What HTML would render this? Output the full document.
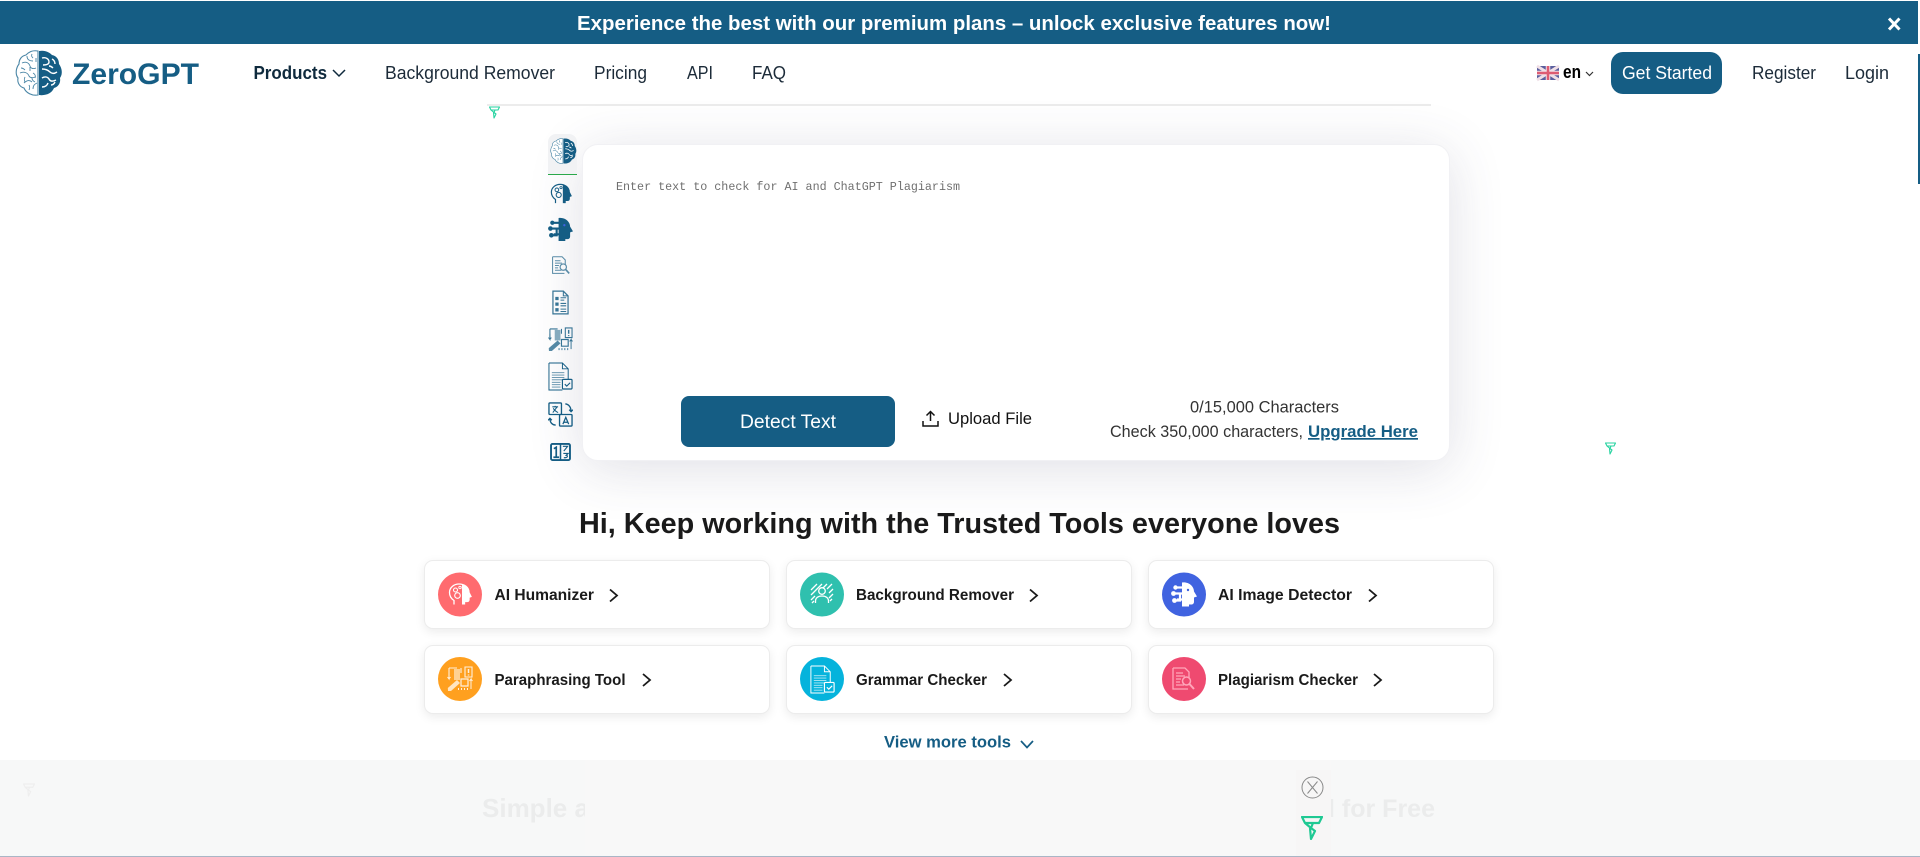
<!DOCTYPE html>
<html lang="en">
<head>
<meta charset="utf-8">
<title>ZeroGPT</title>
<style>
html,body{margin:0;padding:0;width:1920px;height:857px;overflow:hidden;background:#fff;font-family:"Liberation Sans",sans-serif}
.a{position:absolute}
#banner{left:0;top:1px;width:1918px;height:43px;background:#155d84}
#sb{left:1918px;top:54px;width:2px;height:130px;background:#155d84}
#rule{left:487px;top:104px;width:944px;height:2px;background:#ececec}
#start{left:1611px;top:52px;width:111px;height:42px;border-radius:12px;background:#155d84}
#card{left:582px;top:144px;width:868px;height:317px;background:#fff;border-radius:16px;border:1px solid #f1f1f4;box-sizing:border-box;box-shadow:0 8px 55px rgba(60,60,100,.16)}
#side{left:548px;top:134px;width:29px;height:40px;background:#f1f2f4;border-radius:8px 8px 0 0;border-bottom:1px solid #2aa84a}
#btn{left:681px;top:396px;width:214px;height:51px;border-radius:8px;background:#155d84}
.t{height:69px;width:346px;background:#fff;border:1px solid #ececec;border-radius:9px;box-sizing:border-box;box-shadow:0 3px 10px rgba(0,0,0,.08)}
#ov{left:0;top:760px;width:1920px;height:96px;background:#f7f8f8}
#ovl{left:0;top:856px;width:1920px;height:1px;background:#a9b6c6}
svg#top{position:absolute;left:0;top:0}
</style>
</head>
<body>
<div class="a" id="banner"></div>
<div class="a" id="sb"></div>
<div class="a" id="rule"></div>
<div class="a" id="start"></div>
<div class="a" id="card"></div>
<div class="a" id="side"></div>
<div class="a" id="btn"></div>
<div class="a t" style="left:424px;top:560px"></div>
<div class="a t" style="left:786px;top:560px"></div>
<div class="a t" style="left:1148px;top:560px"></div>
<div class="a t" style="left:424px;top:645px"></div>
<div class="a t" style="left:786px;top:645px"></div>
<div class="a t" style="left:1148px;top:645px"></div>
<div class="a" id="ov"></div>
<div class="a" id="ovl"></div>

<svg id="top" width="1920" height="857" viewBox="0 0 1920 857" xmlns="http://www.w3.org/2000/svg" font-family="'Liberation Sans',sans-serif">
<defs>
<symbol id="brain" viewBox="0 0 48 48">
  <path d="M23 2C17 1 14 3 11 6 6 7 4 11 4 15 1 19 0 25 3 29c-1 5 2 9 6 10 2 5 8 8 14 7z" fill="#fff" stroke="#4a86a6" stroke-width="1.100"/>
  <path d="M24 2c6-1 10 1 13 4 5 1 7 5 7 9 3 4 4 10 1 14 1 5-2 9-6 10-2 5-8 8-15 7z" fill="#155d84"/>
  <path d="M7 14c4-2 7 0 8 3s4 3 6 2M12 7c0 4 3 5 6 5M5 24c4-2 8 0 9 3 1 2 4 2 6 1M9 34c3-3 6-3 8-1M15 22v-4M18 40c0-4 2-5 4-6M10 28c-1 2-1 3 0 5M18 24c2 1 3 3 2 5M17 5c-1 2 0 3 1 4M21 9v4M6 19c2 0 3 1 4 2M14 36c1 2 1 3 0 5M20 33c-2-1-3-2-3-4" fill="none" stroke="#4a86a6" stroke-width=".9"/>
  <path d="M27 9c4-1 7 1 7 4s-4 3-6 3M27 20c4 0 6 1 8 3s4 2 7 0M37 10c2 1 3 3 3 5M27 29c3-2 6-1 7 1s3 3 7 1M27 38c3 0 5-1 6-4M36 36c2 0 3-1 4-3M34 17c2 0 3 1 4 2" fill="none" stroke="#fff" stroke-width="1.400"/>
</symbol>
<symbol id="fz" viewBox="0 0 22 24">
  <path d="M1 1h20l-3 6H4zM4 7l6 5M12 7l-2 5 4 3-4 8-1-11" fill="none" stroke="currentColor" stroke-width="2.200" stroke-linejoin="round"/>
</symbol>
<symbol id="head" viewBox="0 0 24 24">
  <path d="M6 22v-4C3 16 1.500 13 1.500 10 1.500 5 6 1.500 11 1.500c5 0 10 3 10 8.500l2 4-2 .8V17c0 1.500-1 2-2 2h-2.500v3" fill="none" stroke="currentColor" stroke-width="1.300"/>
  <path d="M14 1.900c4.500.5 7 4 7 8.100l2 4-2 .8V17c0 1.500-1 2-2 2h-2.500v3H14z" fill="currentColor"/>
  <circle cx="7.500" cy="7.500" r="2" fill="none" stroke="currentColor" stroke-width="1.100"/>
  <circle cx="9.500" cy="13" r="2.800" fill="none" stroke="currentColor" stroke-width="1.100"/>
  <circle cx="12" cy="5" r="1.200" fill="none" stroke="currentColor" stroke-width=".9"/>
</symbol>
<symbol id="aihead" viewBox="0 0 26 26">
  <path d="M11 1c7-1 12 4 12 9l3 5-3 1v4c0 2-1 3-3 3h-2v2h-7V1z" fill="currentColor"/>
  <path d="M12 6H6M12 12H3M12 18H6M9 12v7H4" fill="none" stroke="currentColor" stroke-width="2.200"/>
  <circle cx="4.500" cy="6" r="2.200" fill="currentColor"/><circle cx="2.500" cy="12" r="2.400" fill="currentColor"/><circle cx="3.500" cy="19" r="2.400" fill="currentColor"/>
  <circle cx="17" cy="8.500" r="1.200" fill="#4063e0"/>
</symbol>
<symbol id="docmag" viewBox="0 0 24 24">
  <path d="M2 1h12l4 4v6M2 1v21h15" fill="none" stroke="currentColor" stroke-width="1.300"/>
  <path d="M5 6h7M5 9h9M5 12h5M5 15h4M5 18h8" stroke="currentColor" stroke-width="1.300"/>
  <circle cx="15.500" cy="14" r="4" fill="none" stroke="currentColor" stroke-width="1.500"/>
  <path d="M18.500 17l4.500 5" stroke="currentColor" stroke-width="2"/>
</symbol>
<symbol id="list" viewBox="0 0 18 26">
  <path d="M1 1h11l5 5v19H1z" fill="none" stroke="currentColor" stroke-width="1.300"/>
  <path d="M12 1v5h5" fill="none" stroke="currentColor" stroke-width="1.100"/>
  <path d="M3.500 7h3.500v3.500H3.500zM3.500 13h3.500v3.500H3.500zM3.500 19h3.500v3.500H3.500z" fill="currentColor"/>
  <path d="M9 8h6M9 10.500h4M9 14h6M9 16.500h6M9 20h6M9 22.500h6" stroke="currentColor" stroke-width="1.100"/>
</symbol>
<symbol id="para" viewBox="0 0 26 26">
  <path d="M2 2h8M2 2v10M18 1h7v10h-7zM14 2v5" fill="none" stroke="currentColor" stroke-width="1.100"/>
  <path d="M7 3h6v11H7z" fill="currentColor" opacity=".6"/>
  <path d="M21.500 3v4M21.500 8.500v1" stroke="currentColor" stroke-width="1.500"/>
  <path d="M2 7v6l-1.500-2M2 13l1.500-2M24 23V13l-1.500 2M24 13l1.500 2" fill="none" stroke="currentColor" stroke-width="1"/>
  <path d="M14 13h7v7h-7z" fill="none" stroke="currentColor" stroke-width="1.200"/>
  <path d="M1 25l-.2-3L10 14l3 3-9 8z" fill="currentColor" opacity=".85"/>
  <path d="M11 23h1M14 23h1M17 23h1M20 23h1" stroke="currentColor" stroke-width="2"/>
</symbol>
<symbol id="docchk" viewBox="0 0 26 30">
  <path d="M1 1h14l6 6v11M1 1v28h14M15 1v6h6" fill="none" stroke="currentColor" stroke-width="1"/>
  <path d="M4 11h13M4 13.500h13M4 16h13M4 18.500h11M4 21h9M4 23.500h9M4 26h9" stroke="currentColor" stroke-width=".9" opacity=".7"/>
  <rect x="15" y="18" width="10" height="10" rx="1" fill="none" stroke="currentColor" stroke-width="1.200"/>
  <path d="M17.500 23l2 2 3.500-3.500" fill="none" stroke="currentColor" stroke-width="1.200"/>
</symbol>
<symbol id="trans" viewBox="0 0 26 26">
  <rect x="1" y="1" width="13" height="12" rx="1" fill="none" stroke="currentColor" stroke-width="1.400"/>
  <rect x="12" y="13" width="13" height="12" rx="1" fill="none" stroke="currentColor" stroke-width="1.400"/>
  <path d="M4.500 5h6M7.500 4v1M5 11l4.500-6M5.500 6.500c1 2 3 3.500 5 4.500" fill="none" stroke="currentColor" stroke-width="1.100"/>
  <path d="M15.500 23l3-7 3 7M16.500 21h4" fill="none" stroke="currentColor" stroke-width="1.300"/>
  <path d="M18 2c3 0 6 3 6 8M22 8l2 2 2-2M8 24c-3 0-6-2-6-7M0 19l2-2 2 2" fill="none" stroke="currentColor" stroke-width="1.400"/>
</symbol>
<symbol id="num" viewBox="0 0 22 19">
  <rect x="1" y="1" width="20" height="17" rx="1.500" fill="none" stroke="currentColor" stroke-width="2"/>
  <path d="M11 1v17" stroke="currentColor" stroke-width="1.600"/>
  <path d="M4 6l2.500-1.500V15M3.500 15h6" fill="none" stroke="currentColor" stroke-width="1.800"/>
  <path d="M13.500 3.500h5l-4 5M14 11h5l-2 2c2 0 2 3-2.500 2.500" fill="none" stroke="currentColor" stroke-width="1.200"/>
</symbol>
<symbol id="cut" viewBox="0 0 24 24">
  <path d="M1 8L7 2M1 13L12 2M1 18L5 14M17 2l-4 4M22 2l-5 5M23 7l-4 4M23 12l-4 4M22 17l-2 2M2 21l2-2" stroke="currentColor" stroke-width="1.300" fill="none"/>
  <circle cx="12" cy="9" r="3.300" fill="none" stroke="currentColor" stroke-width="1.300"/>
  <path d="M5.500 21v-2c0-3 2.500-5 6.500-5s6.500 2 6.500 5v2" fill="none" stroke="currentColor" stroke-width="1.300"/>
</symbol>
</defs>

<!-- banner -->
<text x="577" y="30" font-size="20" font-weight="700" fill="#fff" textLength="754" lengthAdjust="spacingAndGlyphs">Experience the best with our premium plans – unlock exclusive features now!</text>
<path d="M1889 18.500l10.500 11M1899.500 18.500l-10.500 11" stroke="#fff" stroke-width="3" fill="none"/>

<!-- logo -->
<use href="#brain" x="15" y="49" width="48" height="48"/>
<text x="72" y="84" font-size="30" font-weight="700" fill="#155d84" textLength="127" lengthAdjust="spacingAndGlyphs">ZeroGPT</text>

<!-- nav -->
<g font-size="18" fill="#1c2b39">
<text x="253.500" y="79" font-weight="700" font-size="18" fill="#0f2a3d" textLength="73.500" lengthAdjust="spacingAndGlyphs">Products</text>
<text x="385" y="79" textLength="170" lengthAdjust="spacingAndGlyphs">Background Remover</text>
<text x="594" y="79" textLength="53" lengthAdjust="spacingAndGlyphs">Pricing</text>
<text x="687" y="79" textLength="26" lengthAdjust="spacingAndGlyphs">API</text>
<text x="752" y="79" textLength="34" lengthAdjust="spacingAndGlyphs">FAQ</text>
<text x="1752" y="79" textLength="64" lengthAdjust="spacingAndGlyphs">Register</text>
<text x="1845" y="79" textLength="44" lengthAdjust="spacingAndGlyphs">Login</text>
</g>
<path d="M333 70l6 6 6-6" fill="none" stroke="#0f2a3d" stroke-width="1.500"/>
<text x="1622" y="79" font-size="18" fill="#fff" textLength="90" lengthAdjust="spacingAndGlyphs">Get Started</text>

<!-- flag -->
<g>
<rect x="1537" y="66" width="22" height="14" rx="2" fill="#5a5f9e"/>
<path d="M1537 66l22 14M1559 66l-22 14" stroke="#f0dfe6" stroke-width="3"/>
<path d="M1548 66v14M1537 73h22" stroke="#f0dfe6" stroke-width="4.500"/>
<path d="M1548 66v14M1537 73h22" stroke="#de5b72" stroke-width="2.500"/>
</g>
<text x="1563" y="78" font-size="18" font-weight="700" fill="#000" textLength="18" lengthAdjust="spacingAndGlyphs">en</text>
<path d="M1586 72l3.500 3.500 3.500-3.500" fill="none" stroke="#333" stroke-width="1.200"/>

<!-- small funnel logos -->
<use href="#fz" x="489" y="106" width="11" height="13" color="#26d3a0"/>
<use href="#fz" x="1605" y="442" width="11" height="13" color="#26d3a0"/>

<!-- sidebar icons -->
<use href="#brain" x="550" y="137" width="27" height="28"/>
<g color="#155d84">
<use href="#head" x="550" y="183" width="22" height="22"/>
<use href="#aihead" x="548" y="217" width="25" height="25"/>
<use href="#docmag" x="551" y="256" width="19" height="19" opacity=".7"/>
<use href="#list" x="552" y="290" width="17" height="25" opacity=".85"/>
<use href="#para" x="548" y="327" width="25" height="25" opacity=".85"/>
<use href="#docchk" x="548" y="362" width="25" height="29"/>
<use href="#trans" x="548" y="402" width="25" height="25"/>
<use href="#num" x="550" y="443" width="21" height="18"/>
</g>

<!-- textarea -->
<text x="616" y="190" font-family="'Liberation Mono',monospace" font-size="11.700" fill="#6f6f6f" textLength="344">Enter text to check for AI and ChatGPT Plagiarism</text>
<text x="740" y="428" font-size="19" fill="#fff" textLength="96" lengthAdjust="spacingAndGlyphs">Detect Text</text>
<path d="M930.500 421v-9M926.500 415.500l4-4 4 4M923 421v5h15v-5" fill="none" stroke="#111" stroke-width="1.500"/>
<text x="948" y="424" font-size="17" fill="#111" textLength="84" lengthAdjust="spacingAndGlyphs">Upload File</text>
<text x="1190" y="412.500" font-size="17" fill="#333" textLength="149" lengthAdjust="spacingAndGlyphs">0/15,000 Characters</text>
<text x="1110" y="437" font-size="17" fill="#333" textLength="193" lengthAdjust="spacingAndGlyphs">Check 350,000 characters,</text>
<text x="1308" y="437" font-size="17" font-weight="700" fill="#155d84" text-decoration="underline" textLength="110" lengthAdjust="spacingAndGlyphs">Upgrade Here</text>

<!-- heading -->
<text x="579" y="533" font-size="28.500" font-weight="700" fill="#1a1a1a" textLength="761" lengthAdjust="spacingAndGlyphs">Hi, Keep working with the Trusted Tools everyone loves</text>

<!-- tools -->
<circle cx="460" cy="594.500" r="22" fill="#ff6b6f"/>
<circle cx="822" cy="594.500" r="22" fill="#2fc0ae"/>
<circle cx="1184" cy="594.500" r="22" fill="#4063e0"/>
<circle cx="460" cy="679" r="22" fill="#ffa01f"/>
<circle cx="822" cy="679" r="22" fill="#05b3dc"/>
<circle cx="1184" cy="679" r="22" fill="#ef4a70"/>
<g color="#fff">
<use href="#head" x="448" y="582" width="24" height="25"/>
<use href="#cut" x="810" y="582" width="24" height="24"/>
<use href="#aihead" x="1171" y="581" width="26" height="27"/>
<use href="#para" x="447" y="666" width="26" height="26" opacity=".85"/>
<use href="#docchk" x="809" y="665" width="27" height="29"/>
</g>
<use href="#docmag" x="1171" y="667" width="24" height="24" color="#ffa6ba"/>
<g font-size="16" font-weight="700" fill="#1a1a1a">
<text x="494.500" y="600" textLength="99.500" lengthAdjust="spacingAndGlyphs">AI Humanizer</text>
<text x="856" y="600" textLength="158" lengthAdjust="spacingAndGlyphs">Background Remover</text>
<text x="1218" y="600" textLength="134" lengthAdjust="spacingAndGlyphs">AI Image Detector</text>
<text x="494.500" y="685" textLength="131" lengthAdjust="spacingAndGlyphs">Paraphrasing Tool</text>
<text x="856" y="685" textLength="131" lengthAdjust="spacingAndGlyphs">Grammar Checker</text>
<text x="1218" y="685" textLength="140" lengthAdjust="spacingAndGlyphs">Plagiarism Checker</text>
</g>
<g fill="none" stroke="#1a1a1a" stroke-width="1.800">
<path d="M610 589.500l7 6-7 6"/>
<path d="M1030 589.500l7 6-7 6"/>
<path d="M1369 589.500l7 6-7 6"/>
<path d="M643 674l7 6-7 6"/>
<path d="M1004 674l7 6-7 6"/>
<path d="M1374 674l7 6-7 6"/>
</g>

<!-- view more -->
<text x="884" y="747.500" font-size="16.500" font-weight="700" fill="#155d84" textLength="127" lengthAdjust="spacingAndGlyphs">View more tools</text>
<path d="M1021 741l6 6.500 6-6.500" fill="none" stroke="#155d84" stroke-width="1.700"/>

<!-- ad overlay -->
<use href="#fz" x="23" y="783" width="12" height="14" color="#eeeeee"/>
<text x="482" y="817" font-size="26" font-weight="700" fill="#ebecec">Simple and Credible Open AI and Gemini Detector</text>
<text x="1435" y="817" font-size="25" font-weight="700" fill="#ebecec" text-anchor="end">Tool for Free</text>
<rect x="585" y="760" width="746" height="96" fill="#f8f8f8"/>
<rect x="1296" y="770" width="35" height="86" fill="#f7f6f6"/>
<ellipse cx="1312.500" cy="787.500" rx="10.500" ry="10.500" fill="none" stroke="#8a8a8a" stroke-width="1"/>
<path d="M1307.500 781.500l10 12M1317.500 781.500l-10 12" stroke="#8a8a8a" stroke-width="1"/>
<use href="#fz" x="1301" y="816" width="22" height="24" color="#1fc993"/>
</svg>
</body>
</html>
